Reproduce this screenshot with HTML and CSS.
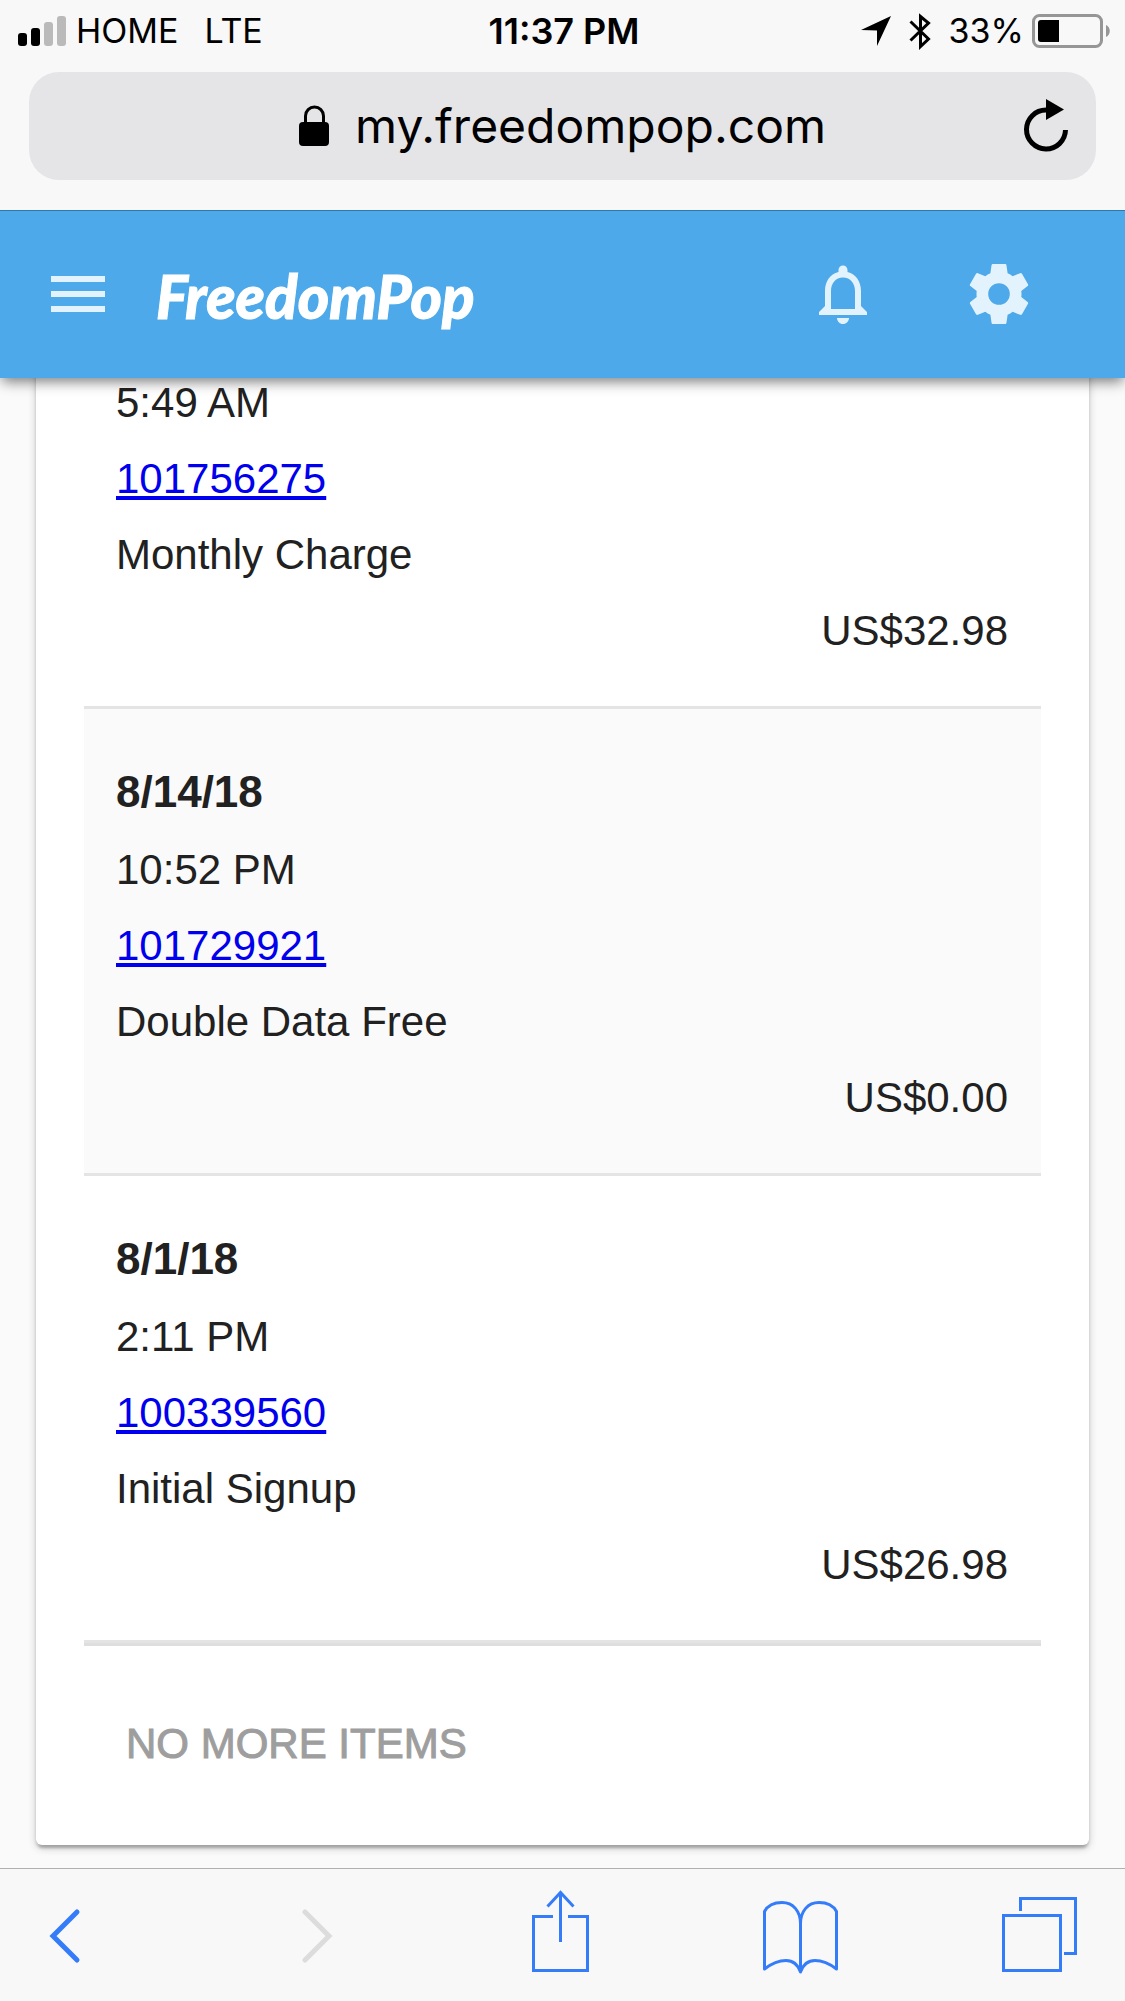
FILE: index.html
```html
<!DOCTYPE html>
<html lang="en">
<head>
<meta charset="utf-8">
<meta name="viewport" content="width=device-width, initial-scale=1">
<title>FreedomPop</title>
<link rel="stylesheet" href="styles.css">
</head>
<body>
<div class="phone">
  <div class="browser-top">
    <div class="status">
      <div class="status-left">
        <svg class="signal" width="48" height="30" viewBox="0 0 48 30" aria-hidden="true">
          <rect x="0" y="17" width="9" height="13" rx="3"/>
          <rect x="13" y="12" width="9" height="18" rx="3"/>
          <rect class="weak" x="26" y="6" width="9" height="24" rx="3"/>
          <rect class="weak" x="39" y="0" width="9" height="30" rx="3"/>
        </svg>
        <span class="carrier">HOME</span>
        <span>LTE</span>
      </div>
      <div class="clock">11:37 PM</div>
      <div class="status-right">
        <svg width="30" height="38" viewBox="0 0 30 38" aria-hidden="true">
          <path d="M0 18 30 4 16 34V18.500z"/>
        </svg>
        <svg width="22" height="38" viewBox="0 0 22 38" aria-hidden="true">
          <path class="bluetooth" d="M1.500 9.500 19.500 27 11.500 34.500V4.500L19.500 11 1.500 28.500"/>
        </svg>
        <span class="percent">33%</span>
        <svg width="78" height="34" viewBox="0 0 78 34" aria-hidden="true">
          <rect class="case" x="1.500" y="1.500" width="68" height="31" rx="6"/>
          <path d="M9 6h18v22H9a3 3 0 0 1-3-3V9a3 3 0 0 1 3-3z"/>
          <path class="nub" d="M74 11c5 2 5 10 0 12z"/>
        </svg>
      </div>
    </div>
    <div class="address">
      <div class="site">
        <svg width="30" height="42" viewBox="0 0 30 42" aria-hidden="true">
          <path class="shackle" d="M6.500 18V11a9 9 0 0 1 18 0v7"/>
          <rect x="0" y="17" width="30" height="24" rx="4"/>
        </svg>
        <span>my.freedompop.com</span>
      </div>
      <button class="reload" type="button" aria-label="Reload">
        <svg width="46" height="54" viewBox="0 0 46 54" aria-hidden="true">
          <path class="ring" d="M42.500 31A19.500 19.500 0 1 1 23 11"/>
          <path d="M23 0 41 10.500 23 21z"/>
        </svg>
      </button>
    </div>
  </div>

  <header class="app-bar">
    <button class="icon-button" type="button" aria-label="Menu">
      <svg width="72" height="72" viewBox="0 0 24 24" aria-hidden="true"><path d="M3 18h18v-2H3v2zm0-5h18v-2H3v2zm0-7v2h18V6H3z"/></svg>
    </button>
    <a class="logo" href="#">FreedomPop</a>
    <div class="app-actions">
      <button class="icon-button" type="button" aria-label="Notifications">
        <svg width="72" height="72" viewBox="0 0 24 24" aria-hidden="true"><path d="M12 22c1.100 0 2-.9 2-2h-4c0 1.100.89 2 2 2zm6-6v-5c0-3.070-1.640-5.640-4.500-6.320V4c0-.83-.67-1.500-1.500-1.500s-1.500.67-1.500 1.500v.68C7.630 5.360 6 7.920 6 11v5l-2 2v1h16v-1l-2-2zm-2 1H8v-6c0-2.480 1.510-4.500 4-4.500s4 2.020 4 4.500v6z"/></svg>
      </button>
      <button class="icon-button" type="button" aria-label="Settings">
        <svg width="72" height="72" viewBox="0 0 24 24" aria-hidden="true"><path d="M19.430 12.980c.04-.32.07-.64.07-.98s-.03-.66-.07-.98l2.110-1.650c.19-.15.24-.42.12-.64l-2-3.460c-.12-.22-.39-.3-.61-.22l-2.490 1c-.52-.4-1.080-.73-1.690-.98l-.38-2.650C14.460 2.180 14.250 2 14 2h-4c-.25 0-.46.18-.49.42l-.38 2.650c-.61.25-1.170.59-1.690.98l-2.490-1c-.23-.09-.49 0-.61.22l-2 3.460c-.13.22-.07.49.12.64l2.110 1.650c-.04.32-.07.65-.07.98s.03.66.07.98l-2.110 1.650c-.19.15-.24.42-.12.64l2 3.460c.12.22.39.3.61.22l2.490-1c.52.4 1.080.73 1.690.98l.38 2.650c.03.24.24.42.49.42h4c.25 0 .46-.18.49-.42l.38-2.650c.61-.25 1.170-.59 1.690-.98l2.490 1c.23.09.49 0 .61-.22l2-3.460c.12-.22.07-.49-.12-.64l-2.110-1.650zM12 15.600a3.600 3.600 0 1 1 0-7.200 3.600 3.600 0 0 1 0 7.200z"/></svg>
      </button>
    </div>
  </header>

  <main class="content">
    <section class="card">
      <ul class="charges">
        <li class="charge">
          <div>5:49 AM</div>
          <div><a href="#">101756275</a></div>
          <div>Monthly Charge</div>
          <div class="amount">US$32.98</div>
        </li>
        <li class="charge">
          <div class="date">8/14/18</div>
          <div>10:52 PM</div>
          <div><a href="#">101729921</a></div>
          <div>Double Data Free</div>
          <div class="amount">US$0.00</div>
        </li>
        <li class="charge">
          <div class="date">8/1/18</div>
          <div>2:11 PM</div>
          <div><a href="#">100339560</a></div>
          <div>Initial Signup</div>
          <div class="amount">US$26.98</div>
        </li>
      </ul>
      <div class="card-footer">
        <button class="more" type="button" disabled>NO MORE ITEMS</button>
      </div>
    </section>
  </main>

  <nav class="toolbar" aria-label="Browser">
    <button type="button" aria-label="Back">
      <svg width="33" height="96" viewBox="0 0 33 96" aria-hidden="true"><path class="chevron" d="M29 24 5 48l24 24"/></svg>
    </button>
    <button type="button" aria-label="Forward" disabled>
      <svg width="33" height="96" viewBox="0 0 33 96" aria-hidden="true"><path class="chevron" d="M3 24l24 24L3 72"/></svg>
    </button>
    <button type="button" aria-label="Share">
      <svg width="57" height="96" viewBox="0 0 57 96" aria-hidden="true"><path d="M21 28.500H1.500v54h54v-54H36M28.500 4v50M15.500 18.500l13-14 13 14"/></svg>
    </button>
    <button type="button" aria-label="Bookmarks">
      <svg width="77" height="96" viewBox="0 0 77 96" aria-hidden="true"><path class="book" d="M38.500 36v48C36 77 31 72.500 24 72.500 17 72.500 9 76 2.500 81V23.500C6 17 13 14.500 20 14.500 31 14.500 38.500 23 38.500 36 38.500 23 46 14.500 57 14.500 64 14.500 71 17 74.500 23.500V81C68 76 60 72.500 53 72.500 46 72.500 41 77 38.500 84"/></svg>
    </button>
    <button type="button" aria-label="Tabs">
      <svg width="75" height="96" viewBox="0 0 75 96" aria-hidden="true"><path d="M1.500 27.500h57v55h-57zM18.500 23V10.500h55v55H62"/></svg>
    </button>
  </nav>
</div>
</body>
</html>
```

FILE: styles.css
```css
* {
  box-sizing: border-box;
}

body {
  margin: 0;
  background: #fafafa;
  color: #212121;
  font: 42px/76px "Liberation Sans", Arial, sans-serif;
}

button {
  margin: 0;
  padding: 0;
  border: 0;
  background: none;
  font: inherit;
}

svg {
  display: block;
  flex: none;
}

.phone {
  display: flex;
  flex-direction: column;
  height: 100vh;
}

/* Browser chrome */
.browser-top {
  position: relative;
  z-index: 2;
  flex: none;
  padding: 10px 29px 30px;
  border-bottom: 1px solid #2f78a9;
  background: #f8f8f8;
  color: #000;
  font-family: Inter, sans-serif;
}

.status {
  display: grid;
  grid-template-columns: 1fr auto 1fr;
  align-items: center;
  height: 42px;
  margin: 0 -14px 20px -11px;
  font-size: 34px;
  line-height: 42px;
}

.status-left,
.status-right {
  display: flex;
  align-items: center;
}

.status-left {
  gap: 10px;
}

.status-right {
  justify-content: flex-end;
  gap: 18px;
}

.percent {
  margin-right: -10px;
}

.carrier {
  margin-right: 16px;
}

.clock {
  font-size: 36px;
  font-weight: 600;
}

.weak {
  fill: #bababa;
}

.bluetooth {
  fill: none;
  stroke: #000;
  stroke-width: 3;
}

.case {
  fill: none;
  stroke: #969696;
  stroke-width: 3;
}

.nub {
  fill: #969696;
}

.address {
  display: grid;
  grid-template-columns: 1fr auto 1fr;
  align-items: center;
  height: 108px;
  padding: 0 27px;
  border-radius: 30px;
  background: #e5e5e7;
  font-size: 48px;
}

.site {
  display: flex;
  grid-column: 2;
  align-items: center;
  gap: 26px;
}

.reload {
  justify-self: end;
}

.shackle {
  fill: none;
  stroke: #000;
  stroke-width: 3;
}

.ring {
  fill: none;
  stroke: #000;
  stroke-width: 5;
}

/* App header */
.app-bar {
  position: relative;
  z-index: 1;
  display: flex;
  flex: none;
  align-items: center;
  height: 167px;
  padding: 0 90px 1px 42px;
  background: #4da9e9;
  box-shadow: 0 6px 12px -3px rgba(0, 0, 0, 0.4), 0 3px 15px rgba(0, 0, 0, 0.2);
}

.icon-button {
  fill: #e3f3fd;
}

.logo {
  margin-left: 42px;
  padding-top: 4px;
  color: #fff;
  font: italic 900 60px/72px Lato, sans-serif;
  text-decoration: none;
  -webkit-text-stroke: 1px #fff;
}

.app-actions {
  display: flex;
  gap: 84px;
  margin-left: auto;
}

/* Billing history, scrolled to its end */
.content {
  display: flex;
  flex: 1;
  flex-direction: column;
  justify-content: flex-end;
  min-height: 0;
  overflow: hidden;
  padding: 0 36px 23px;
}

.card {
  flex: none;
  padding: 0 48px;
  border-radius: 6px;
  background: #fff;
  box-shadow: 0 3px 9px rgba(0, 0, 0, 0.2), 0 3px 3px rgba(0, 0, 0, 0.14), 0 6px 3px -3px rgba(0, 0, 0, 0.12);
}

.charges {
  margin: 0;
  padding: 0;
  border-bottom: 3px solid #dedede;
  list-style: none;
}

.charge {
  padding: 45px 33px 37px 32px;
  border-bottom: 3px solid #e4e4e4;
}

.charge:nth-child(even) {
  background: #fafafa;
}

.charge a {
  color: #0000ee;
}

.date {
  margin-bottom: 2px;
  font-size: 44px;
  font-weight: 700;
}

.amount {
  text-align: right;
}

.card-footer {
  padding: 60px 42px 63px;
}

.more {
  display: block;
  color: #9e9e9e;
  -webkit-text-stroke: 1px #9e9e9e;
}

/* Browser toolbar */
.toolbar {
  display: grid;
  flex: none;
  grid-template-columns: 254fr 230fr 230fr 240fr 75px;
  justify-items: start;
  padding: 19px 48px 17px;
  border-top: 1px solid #b0b0b0;
  background: #f8f8f8;
}

.toolbar svg {
  fill: none;
  stroke: #357cf9;
  stroke-width: 3;
}

.toolbar .chevron {
  stroke-width: 5;
  stroke-linecap: round;
}

.toolbar .book {
  stroke-linejoin: round;
}

.toolbar button:disabled svg {
  stroke: #dcdcdc;
}
```
